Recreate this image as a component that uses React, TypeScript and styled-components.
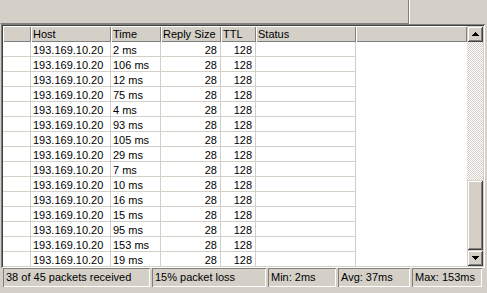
import { createGlobalStyle } from 'styled-components';
import styled from 'styled-components';

const GlobalStyle = createGlobalStyle`
  html, body {
    margin: 0;
    padding: 0;
    background: #d4d0c8;
  }
`;

const face = '#d4d0c8';
const shadow = '#808080';
const darkShadow = '#404040';

const Window = styled.div`
  width: 487px;
  height: 293px;
  background: ${face};
  display: flex;
  flex-direction: column;
  font-family: 'Liberation Sans', Arial, sans-serif;
  font-size: 11px;
  color: #000;
  overflow: hidden;
`;

const TopPanel = styled.div`
  width: 409px;
  height: 24px;
  box-sizing: border-box;
  border-left: 1px solid ${face};
  border-right: 1px solid ${shadow};
  border-bottom: 1px solid ${shadow};
  box-shadow: 1px 0 0 #fff;
  flex-shrink: 0;
`;

const ListView = styled.div`
  margin-left: 1px;
  width: 484px;
  height: 244px;
  box-sizing: border-box;
  padding: 2px;
  display: flex;
  flex-shrink: 0;
  box-shadow:
    inset 1px 1px 0 ${shadow},
    inset -1px -1px 0 #fff,
    inset 2px 2px 0 ${darkShadow},
    inset -2px -2px 0 ${face};
`;

const TableArea = styled.div`
  flex: 1;
  background: #fff;
  overflow: hidden;
  display: flex;
  flex-direction: column;
`;

const HeaderRow = styled.div`
  display: flex;
  height: 16px;
  flex-shrink: 0;
  background: ${face};
`;

const HeaderCell = styled.div<{ $w?: number }>`
  box-sizing: border-box;
  ${(p) => (p.$w ? `width: ${p.$w}px; flex-shrink: 0;` : 'flex: 1;')}
  height: 16px;
  padding: 1px 0 0 2px;
  line-height: 15px;
  white-space: nowrap;
  box-shadow:
    inset 1px 1px 0 #fff,
    inset -1px -1px 0 ${shadow};
`;

const Row = styled.div`
  display: flex;
  height: 15px;
  flex-shrink: 0;
`;

const Cell = styled.div<{ $w: number; $right?: boolean }>`
  box-sizing: border-box;
  width: ${(p) => p.$w}px;
  flex-shrink: 0;
  height: 15px;
  line-height: 16px;
  border-right: 1px solid ${face};
  border-bottom: 1px solid ${face};
  padding: 0 3px 0 2px;
  text-align: ${(p) => (p.$right ? 'right' : 'left')};
  white-space: nowrap;
  overflow: hidden;
`;

const Scrollbar = styled.div`
  width: 16px;
  display: flex;
  flex-direction: column;
`;

const RaisedBox = styled.div<{ $h?: number }>`
  box-sizing: border-box;
  width: 16px;
  height: ${(p) => p.$h ?? 16}px;
  flex-shrink: 0;
  background: ${face};
  display: flex;
  align-items: center;
  justify-content: center;
  box-shadow:
    inset 1px 1px 0 ${face},
    inset -1px -1px 0 ${darkShadow},
    inset 2px 2px 0 #fff,
    inset -2px -2px 0 ${shadow};
`;

const Track = styled.div`
  flex: 1;
  background: repeating-conic-gradient(${face} 0 25%, #fff 0 50%) 0 0 / 2px 2px;
`;

const StatusBar = styled.div`
  display: flex;
  gap: 2px;
  padding: 0 0 0 3px;
  height: 19px;
`;

const StatusPanel = styled.div<{ $w: number }>`
  box-sizing: border-box;
  width: ${(p) => p.$w}px;
  height: 19px;
  line-height: 19px;
  padding-left: 3px;
  white-space: nowrap;
  box-shadow:
    inset 1px 1px 0 ${shadow},
    inset -1px -1px 0 #fff;
`;

const Arrow = ({ up }: { up?: boolean }) => (
  <svg width="7" height="4" viewBox="0 0 7 4" style={{ display: 'block' }}>
    <path d={up ? 'M3.5 0 L7 4 L0 4 Z' : 'M0 0 L7 0 L3.5 4 Z'} fill="#000" shapeRendering="crispEdges" />
  </svg>
);

const columns = [
  { title: '', w: 28 },
  { title: 'Host', w: 80 },
  { title: 'Time', w: 50 },
  { title: 'Reply Size', w: 60 },
  { title: 'TTL', w: 35 },
  { title: 'Status', w: 100 },
];

const times = [2, 106, 12, 75, 4, 93, 105, 29, 7, 10, 16, 15, 95, 153, 19];

export default function App() {
  return (
    <Window>
      <GlobalStyle />
      <TopPanel />
      <ListView>
        <TableArea>
          <HeaderRow>
            {columns.map((c) => (
              <HeaderCell key={c.title || 'blank'} $w={c.w}>
                {c.title}
              </HeaderCell>
            ))}
            <HeaderCell />
          </HeaderRow>
          {times.map((t, i) => (
            <Row key={i}>
              <Cell $w={28} />
              <Cell $w={80}>193.169.10.20</Cell>
              <Cell $w={50}>{t} ms</Cell>
              <Cell $w={60} $right>
                28
              </Cell>
              <Cell $w={35} $right>
                128
              </Cell>
              <Cell $w={100} />
            </Row>
          ))}
        </TableArea>
        <Scrollbar>
          <RaisedBox>
            <Arrow up />
          </RaisedBox>
          <Track />
          <RaisedBox $h={70} />
          <RaisedBox>
            <Arrow />
          </RaisedBox>
        </Scrollbar>
      </ListView>
      <StatusBar>
        <StatusPanel $w={147}>38 of 45 packets received</StatusPanel>
        <StatusPanel $w={114}>15% packet loss</StatusPanel>
        <StatusPanel $w={68}>Min: 2ms</StatusPanel>
        <StatusPanel $w={72}>Avg: 37ms</StatusPanel>
        <StatusPanel $w={70}>Max: 153ms</StatusPanel>
      </StatusBar>
    </Window>
  );
}
